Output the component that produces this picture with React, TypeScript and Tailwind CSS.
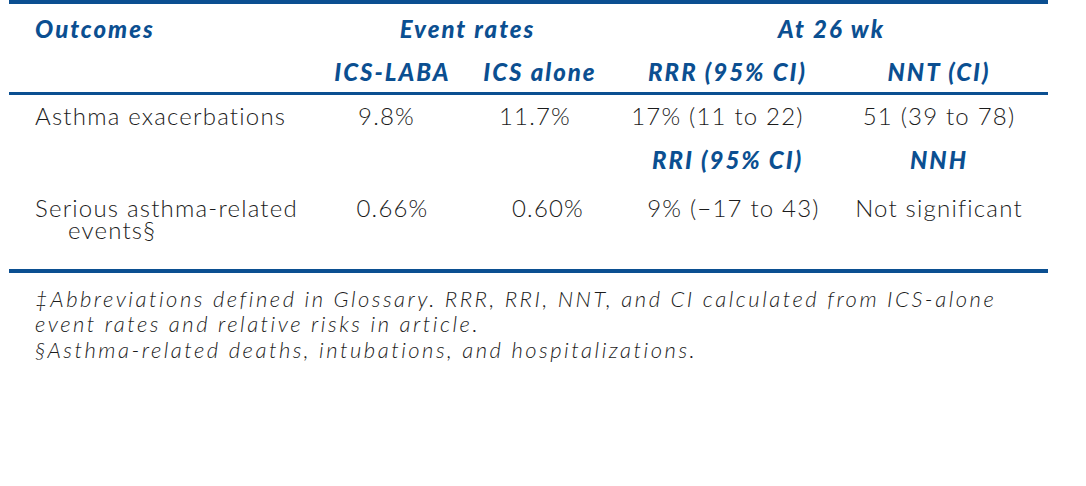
import React from "react";

const blue = "text-[#0b4f91]";

export default function App() {
  const cols = "grid grid-cols-[311px_145px_150px_225px_208px]";
  const head = `font-['Lato',sans-serif] font-black italic text-[24px] tracking-[2px] whitespace-nowrap ${blue}`;
  const body = "font-['Lato',sans-serif] font-light text-[24px] tracking-[1.2px] text-[#1c1c1c]";
  return (
    <div className="w-[1086px] h-[486px] bg-white">
      <div className="ml-[9px] w-[1039px]">
        <div className="h-[4px] bg-[#0b4f91]" />
        <div className={`${cols} h-[50px] items-center ${head}`}>
          <div className="pl-[26px]">Outcomes</div>
          <div className="col-span-2 text-center">Event rates</div>
          <div className="col-span-2 text-center">At 26 wk</div>
        </div>
        <div className={`${cols} h-[34px] mb-[4px] items-center ${head}`}>
          <div />
          <div className="text-center">ICS-LABA</div>
          <div className="text-center">ICS alone</div>
          <div className="text-center">RRR (95% CI)</div>
          <div className="text-center pr-[10px]">NNT (CI)</div>
        </div>
        <div className="h-[3px] bg-[#0b4f91]" />
        <div className={`${cols} h-[42px] items-center ${body}`}>
          <div className="pl-[26px] whitespace-nowrap">Asthma exacerbations</div>
          <div className="text-center pr-[12px]">9.8%</div>
          <div className="text-center pr-[10px]">11.7%</div>
          <div className="text-center pr-[20px]">17% (11 to 22)</div>
          <div className="text-center pr-[10px]">51 (39 to 78)</div>
        </div>
        <div className={`${cols} h-[46px] items-center ${head}`}>
          <div />
          <div />
          <div />
          <div className="text-center">RRI (95% CI)</div>
          <div className="text-center pr-[10px]">NNH</div>
        </div>
        <div className={`${cols} pt-[14px] pb-[28px] items-start leading-[22px] ${body}`}>
          <div className="pl-[26px] whitespace-nowrap">
            <div>Serious asthma-related</div>
            <div className="pl-[33px]">events§</div>
          </div>
          <div className="text-center">0.66%</div>
          <div className="text-center pl-[16px]">0.60%</div>
          <div className="text-center pl-[12px]">9% (−17 to 43)</div>
          <div className="text-center pr-[10px] whitespace-nowrap">Not significant</div>
        </div>
        <div className="h-[4px] bg-[#0b4f91]" />
        <div className="pl-[26px] pt-[13px] font-['Lato',sans-serif] font-light italic text-[22px] tracking-[2.5px] leading-[25px] text-[#1c1c1c] whitespace-nowrap">
          <p>‡Abbreviations defined in Glossary. RRR, RRI, NNT, and CI calculated from ICS-alone<br />event rates and relative risks in article.</p>
          <p className="mt-[1px]">§Asthma-related deaths, intubations, and hospitalizations.</p>
        </div>
      </div>
    </div>
  );
}
